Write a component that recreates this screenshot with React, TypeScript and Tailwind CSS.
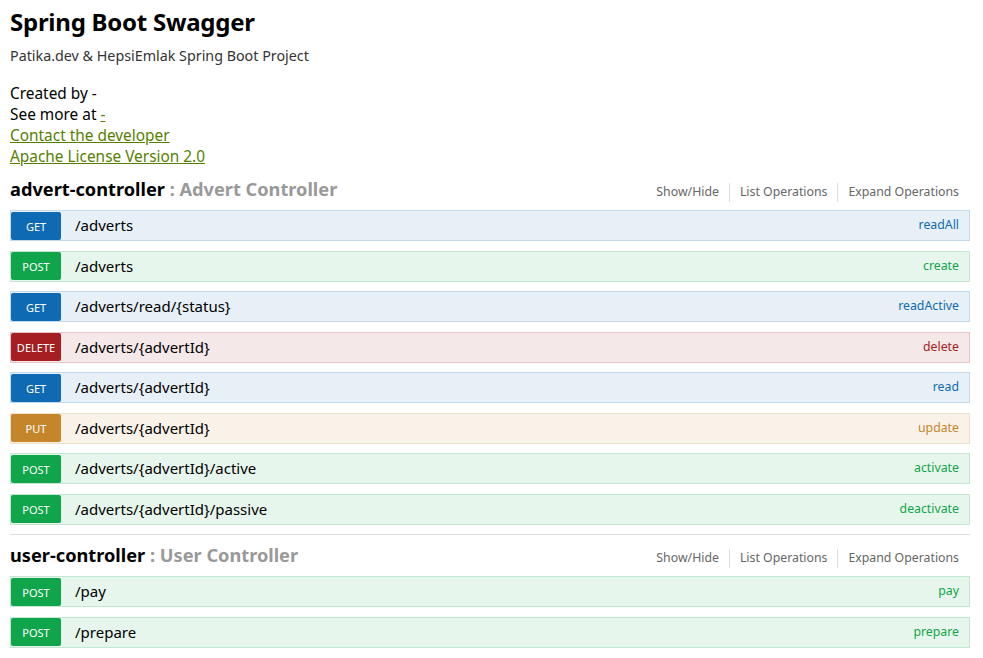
import React from "react";

type Method = "GET" | "POST" | "PUT" | "DELETE";

type Op = {
  method: Method;
  path: string;
  summary: string;
};

const styles: Record<Method, { row: string; badge: string; text: string }> = {
  GET: {
    row: "bg-[#e7f0f7] border-[#c3d9ec]",
    badge: "bg-[#0f6ab4]",
    text: "text-[#0f6ab4]",
  },
  POST: {
    row: "bg-[#e7f6ec] border-[#c3e8d1]",
    badge: "bg-[#10a54a]",
    text: "text-[#10a54a]",
  },
  PUT: {
    row: "bg-[#f9f2e9] border-[#f0e0ca]",
    badge: "bg-[#c5862b]",
    text: "text-[#c5862b]",
  },
  DELETE: {
    row: "bg-[#f5e8e8] border-[#e8c6c7]",
    badge: "bg-[#a41e22]",
    text: "text-[#a41e22]",
  },
};

const advertOps: Op[] = [
  { method: "GET", path: "/adverts", summary: "readAll" },
  { method: "POST", path: "/adverts", summary: "create" },
  { method: "GET", path: "/adverts/read/{status}", summary: "readActive" },
  { method: "DELETE", path: "/adverts/{advertId}", summary: "delete" },
  { method: "GET", path: "/adverts/{advertId}", summary: "read" },
  { method: "PUT", path: "/adverts/{advertId}", summary: "update" },
  { method: "POST", path: "/adverts/{advertId}/active", summary: "activate" },
  { method: "POST", path: "/adverts/{advertId}/passive", summary: "deactivate" },
];

const userOps: Op[] = [
  { method: "POST", path: "/pay", summary: "pay" },
  { method: "POST", path: "/prepare", summary: "prepare" },
];

const Operation: React.FC<{ op: Op }> = ({ op }) => {
  const s = styles[op.method];
  return (
    <li className={`flex items-center h-[31px] mb-[9.5px] border ${s.row}`}>
      <span
        className={`flex items-center justify-center w-[50px] h-[28px] pt-[3px] rounded-[2px] text-white text-[11px] ${s.badge}`}
      >
        {op.method}
      </span>
      <span className="ml-[14px] text-[15px] text-black">{op.path}</span>
      <span className={`ml-auto mr-[10px] text-[12.3px] ${s.text}`}>
        {op.summary}
      </span>
    </li>
  );
};

const Resource: React.FC<{ name: string; title: string; ops: Op[] }> = ({
  name,
  title,
  ops,
}) => {
  return (
    <div>
      <div className="flex items-center justify-between h-[22px] mb-[10px]">
        <h2 className="text-[18.2px] font-bold text-black leading-none">
          {name}
          <span className="text-[#999]"> : {title}</span>
        </h2>
        <ul className="flex items-center text-[12.3px] text-[#666] mr-[11px] mt-[7px]">
          <li className="pr-[10px]">Show/Hide</li>
          <li className="px-[10px] border-l border-[#ddd]">List Operations</li>
          <li className="pl-[10px] border-l border-[#ddd]">Expand Operations</li>
        </ul>
      </div>
      <ul>
        {ops.map((op, i) => (
          <Operation key={i} op={op} />
        ))}
      </ul>
    </div>
  );
};

export default function App() {
  return (
    <div
      className="w-[983px] h-[658px] overflow-hidden bg-white px-[10px] pt-[4px]"
      style={{ fontFamily: '"Noto Sans", "Open Sans", sans-serif' }}
    >
      <div className="w-[960px]">
        {/* Info */}
        <h1 className="text-[24px] tracking-[-0.25px] font-bold text-black leading-[36px]">
          Spring Boot Swagger
        </h1>
        <p className="text-[14.3px] text-[#333] leading-[20px] mt-[6px]">
          Patika.dev &amp; HepsiEmlak Spring Boot Project
        </p>
        <div className="text-[15.4px] leading-[21px] text-black mt-[17px]">
          <div>Created by -</div>
          <div>
            See more at <a className="text-[#547f00] underline">-</a>
          </div>
          <div>
            <a className="text-[#547f00] underline">Contact the developer</a>
          </div>
          <div>
            <a className="text-[#547f00] underline">Apache License Version 2.0</a>
          </div>
        </div>

        <div className="mt-[11px]">
          <Resource
            name="advert-controller"
            title="Advert Controller"
            ops={advertOps}
          />
        </div>
        <div className="border-t border-[#ddd] pt-[9px]">
          <Resource name="user-controller" title="User Controller" ops={userOps} />
        </div>
      </div>
    </div>
  );
}
